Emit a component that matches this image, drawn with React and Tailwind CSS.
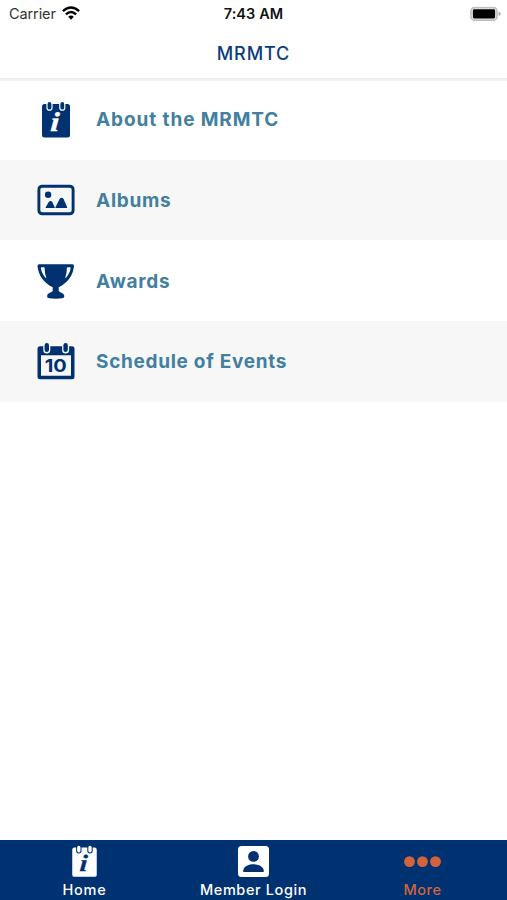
import clsx from 'clsx';

function NotepadIcon({ className, accent }) {
  return (
    <svg viewBox="0 0 40 40" className={className}>
      <rect x="6" y="4" width="28" height="33.5" rx="2.5" fill="currentColor" />
      {[13.5, 26.3].map((x) => (
        <g key={x}>
          <rect x={x - 3.1} y="-1" width="6.2" height="11.8" rx="3.1" fill={accent} />
          <rect x={x - 1.9} y="2" width="3.8" height="7.6" rx="1.9" fill="currentColor" />
        </g>
      ))}
      <text transform="translate(18.4 31.4) skewX(-4)" textAnchor="middle" fontFamily="Liberation Serif, serif" fontSize="27" fontWeight="700" fontStyle="italic" textLength="8.8" lengthAdjust="spacingAndGlyphs" fill={accent} stroke={accent} strokeWidth="0.4">i</text>
    </svg>
  );
}

function AlbumIcon({ className }) {
  return (
    <svg viewBox="0 0 40 40" className={className}>
      <rect x="2.9" y="6.2" width="34.2" height="27.6" rx="3.2" fill="none" stroke="currentColor" strokeWidth="2.9" />
      <circle cx="12.1" cy="14.8" r="3.2" fill="currentColor" />
      <g fill="currentColor" stroke="currentColor" strokeWidth="1.2" strokeLinejoin="round">
        <path d="M10.2 27.5L13.3 22.2Q14.5 21 15.7 22.2L18.2 27.5Z" />
        <path d="M20 27.5L24.2 19.2Q25.6 17.6 27 19.2L30.6 27.5Z" />
      </g>
    </svg>
  );
}

function TrophyIcon({ className }) {
  return (
    <svg viewBox="0 0 40 40" className={className}>
      <path
        fill="currentColor"
        fillRule="evenodd"
        d="M3 4.2H36.5Q38.2 4.3 38 6.2C37 15.2 32 22.6 22.7 27.2V30.4C22.7 32.4 28.2 32.6 28.2 35.6V37Q28 38.7 19.8 38.7Q11.2 38.7 11.2 37V35.6C11.2 32.6 16.7 32.4 16.7 30.4V27.2C7.5 22.6 2.5 15.2 1.5 6.2Q1.4 4.3 3 4.2ZM5.5 7.3Q4.8 7.3 4.9 8.2C5.4 11.8 7 15 9.8 17.9Q10.5 18.2 10.2 17.2C8.9 13.6 8.7 11.1 8.7 8.3Q8.6 7.3 7.9 7.3ZM31.6 7.3Q30.9 7.3 30.8 8.3C30.8 11.1 30.6 13.6 29.3 17.2Q29 18.2 29.7 17.9C32.5 15 34.1 11.8 34.6 8.2Q34.7 7.3 34 7.3Z"
      />
    </svg>
  );
}

function CalendarIcon({ className }) {
  return (
    <svg viewBox="0 0 40 40" className={className}>
      <path
        fill="currentColor"
        fillRule="evenodd"
        d="M4 5.2H36Q38.5 5.2 38.5 7.7V35.8Q38.5 38.3 36 38.3H4Q1.5 38.3 1.5 35.8V7.7Q1.5 5.2 4 5.2ZM5 14.2V34.8H35V14.2Z"
      />
      {[10.8, 29.6].map((x) => (
        <g key={x}>
          <rect x={x - 3.5} y="0" width="7" height="12.4" rx="3.5" fill="#f7f7f7" />
          <rect x={x - 2.2} y="2" width="4.4" height="9" rx="2.2" fill="currentColor" />
        </g>
      ))}
      <text x="19.8" y="31.4" textAnchor="middle" fontFamily="Inter, sans-serif" fontSize="18" fontWeight="700" textLength="22" lengthAdjust="spacingAndGlyphs" fill="currentColor">10</text>
    </svg>
  );
}

function WifiIcon() {
  return (
    <svg viewBox="0 0 18 14" className="h-3.5 w-[18px] -translate-y-px" fill="none" stroke="#000" strokeWidth="2.4">
      <path d="M0.9 5.2Q9 -2.2 17.1 5.2" />
      <path d="M3.9 8.4Q9 3.8 14.1 8.4" />
      <path d="M6.2 10.7Q9 8.3 11.8 10.7L9 13.7Z" fill="#000" stroke="none" />
    </svg>
  );
}

function BatteryIcon() {
  return (
    <svg viewBox="0 0 31 15" className="h-[15px] w-[31px] -translate-y-[0.5px]">
      <rect x="1" y="1" width="26" height="12.8" rx="3.6" fill="#e4e4e4" stroke="#bdbdbd" strokeWidth="1.6" />
      <rect x="2.9" y="2.8" width="22.2" height="9.2" rx="1.4" fill="#000" />
      <path d="M28.6 5Q30.8 5.8 30.8 7.4Q30.8 8.9 28.6 9.6Z" fill="#aaa" />
    </svg>
  );
}

const items = [
  { title: 'About the MRMTC', icon: NotepadIcon, row: 'h-20', text: 'leading-10 tracking-[0.9px]' },
  { title: 'Albums', icon: AlbumIcon, row: 'h-20 bg-[#f7f7f7]', text: 'leading-[42px] tracking-[0.7px]' },
  { title: 'Awards', icon: TrophyIcon, row: 'h-[81px]', text: 'leading-[43px] tracking-[0.75px]' },
  { title: 'Schedule of Events', icon: CalendarIcon, row: 'h-[81px] bg-[#f7f7f7]', text: 'leading-[42px] tracking-[0.7px]' },
];

export default function App() {
  return (
    <div className="flex h-[900px] w-[507px] flex-col overflow-hidden bg-white font-['Inter',sans-serif]">
      <div className="grid h-7 grid-cols-3 items-center pl-[9px] pr-[6px] text-[14.5px] leading-7 text-[#111]">
        <div className="flex items-center gap-[6px]">
          <span className="tracking-[-0.1px] text-[#333]">Carrier</span>
          <WifiIcon />
        </div>
        <span className="-ml-[3px] text-center font-semibold tracking-[0.1px]">7:43 AM</span>
        <div className="flex justify-end">
          <BatteryIcon />
        </div>
      </div>

      <header className="flex h-[53px] items-center justify-center border-b-3 border-[#f0f0f0]">
        <h1 className="text-[18px] font-medium tracking-[0.9px] text-[#0d3b80]">MRMTC</h1>
      </header>

      <main className="-mt-px flex-1">
        {items.map(({ title, icon: Icon, row, text }) => (
          <a key={title} className={clsx('flex items-start gap-5 pl-9 pt-5', row)}>
            <Icon className="size-10 text-[#003272]" accent="#fff" />
            <span className={clsx('text-[19px] font-bold text-[#437f9e]', text)}>{title}</span>
          </a>
        ))}
      </main>

      <nav className="grid h-[60px] grid-cols-3 bg-[#003272] text-[14.5px] font-medium text-white">
        <a className="flex flex-col items-center pt-1">
          <NotepadIcon className="size-[35px]" accent="#003272" />
          <span className="leading-[22px] tracking-[0.8px]">Home</span>
        </a>
        <a className="flex flex-col items-center pt-1">
          <svg viewBox="0 0 35 35" className="size-[35px]">
            <rect x="2" y="2" width="31" height="31" rx="3.5" fill="#fff" />
            <circle cx="17.5" cy="12.4" r="5.4" fill="#003272" />
            <path d="M7.3 28V26.2C7.8 22.3 13.2 20.3 17.5 20.3S27.2 22.3 27.7 26.2V28Z" fill="#003272" />
          </svg>
          <span className="leading-[22px] tracking-[0.6px]">Member Login</span>
        </a>
        <a className="flex flex-col items-center pt-1 text-[#d2633b]">
          <svg viewBox="0 0 38 35" className="h-[35px] w-[38px] -translate-x-[0.5px]" fill="currentColor">
            <circle cx="6" cy="17.6" r="5.4" />
            <circle cx="19" cy="17.6" r="5.4" />
            <circle cx="32" cy="17.6" r="5.4" />
          </svg>
          <span className="leading-[22px] tracking-[0.6px]">More</span>
        </a>
      </nav>
    </div>
  );
}
